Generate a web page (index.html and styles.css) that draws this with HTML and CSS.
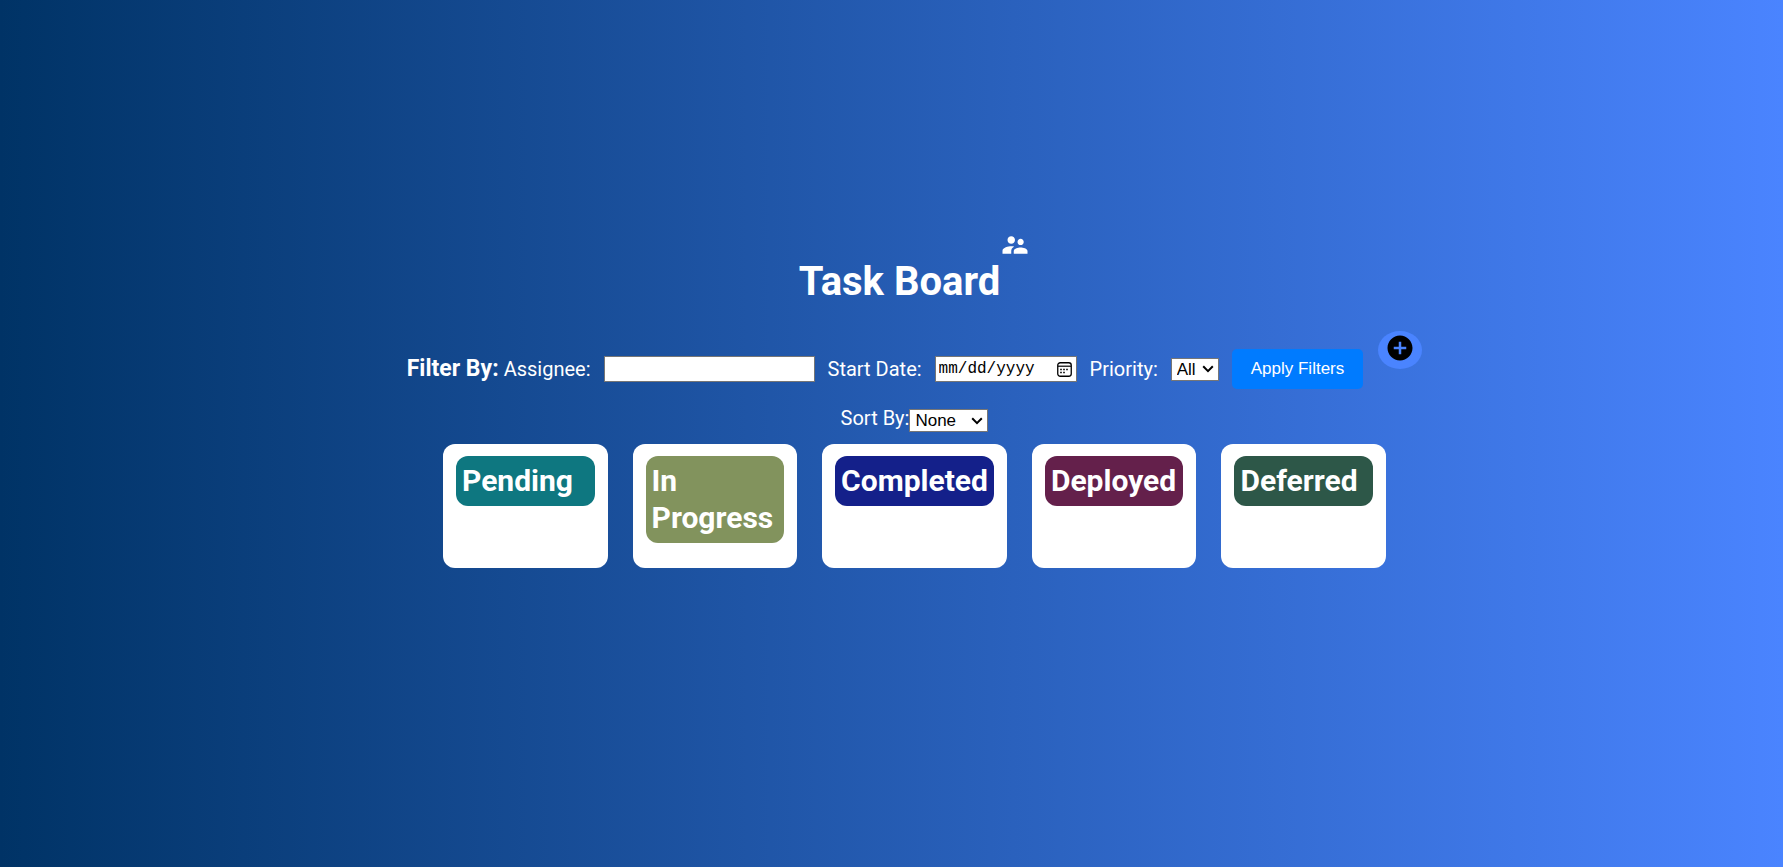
FILE: index.html
```html
<!DOCTYPE html>
<html lang="en">
<head>
<meta charset="utf-8">
<title>Task Board</title>
<link rel="stylesheet" href="styles.css">
</head>
<body>
<main class="board">
  <header class="board-header">
    <h1 class="board-title">Task Board</h1>
    <svg class="icon" viewBox="0 0 24 24" aria-hidden="true"><path d="M16.5 12c1.38 0 2.49-1.12 2.49-2.5S17.88 7 16.5 7C15.12 7 14 8.12 14 9.5s1.12 2.5 2.5 2.5zM9 11c1.66 0 2.99-1.34 2.99-3S10.66 5 9 5C7.34 5 6 6.34 6 8s1.34 3 3 3zm7.5 3c-1.83 0-5.5.92-5.5 2.75V19h11v-2.25c0-1.83-3.67-2.75-5.5-2.75zM9 13c-2.33 0-7 1.17-7 3.5V19h7v-2.25c0-.85.33-2.34 2.37-3.47C10.5 13.1 9.66 13 9 13z"/></svg>
  </header>
  <div class="toolbar">
    <form class="filters">
      <h2 class="filters-title">Filter By:</h2>
      <label for="assignee">Assignee:</label>
      <input class="field assignee" id="assignee" type="text">
      <label for="start-date">Start Date:</label>
      <input class="field date" id="start-date" type="date">
      <label for="priority">Priority:</label>
      <select class="field select" id="priority"><option>All</option><option>Low</option></select>
      <button class="apply" type="button">Apply Filters</button>
    </form>
    <button class="add" type="button" aria-label="Add task">
      <svg class="icon" viewBox="0 0 24 24" aria-hidden="true"><path d="M12 2C6.48 2 2 6.48 2 12s4.48 10 10 10 10-4.48 10-10S17.52 2 12 2zm5 11h-4v4h-2v-4H7v-2h4V7h2v4h4v2z"/></svg>
    </button>
  </div>
  <div class="sort">
    <label for="sort">Sort By:</label>
    <select class="field select sort-select" id="sort"><option>None</option><option>Priority</option></select>
  </div>
  <div class="columns">
    <section class="column"><h2 class="column-title pending">Pending</h2></section>
    <section class="column"><h2 class="column-title progress">In Progress</h2></section>
    <section class="column"><h2 class="column-title completed">Completed</h2></section>
    <section class="column"><h2 class="column-title deployed">Deployed</h2></section>
    <section class="column"><h2 class="column-title deferred">Deferred</h2></section>
  </div>
</main>
</body>
</html>
```
FILE: styles.css
```css
* {
  box-sizing: border-box;
}

body {
  margin: 0;
  color: #fff;
  font: 20px/23px Roboto, sans-serif;
  background: linear-gradient(to right, #003366, #4a84ff);
}

.board {
  min-height: 100vh;
  display: flex;
  flex-direction: column;
  align-items: center;
  justify-content: center;
  padding: 0 0 69px 46px;
}

.board-header,
.toolbar {
  display: flex;
  align-items: flex-start;
}

.board-title {
  margin: 28px 0 26px;
  font-size: 40px;
  line-height: 47px;
}

.icon {
  display: block;
  width: 30px;
  height: 30px;
  fill: currentColor;
}

.toolbar {
  gap: 15px;
}

.filters {
  display: flex;
  align-items: center;
  gap: 13px;
  padding-top: 2px;
}

.filters-title {
  margin: 22px -8px 22px 0;
  font-size: 23px;
  line-height: 28px;
}

.field {
  font-family: "Liberation Sans", sans-serif;
  font-size: 17px;
  border: 1px solid #767676;
  border-radius: 0;
  background: #fff;
  color: #000;
}

.assignee {
  width: 211px;
  height: 26px;
}

.date {
  width: 142px;
  height: 26px;
  padding: 0 4px 0 3px;
  font-family: "Liberation Mono", monospace;
  font-size: 16px;
}

.date::-webkit-datetime-edit-fields-wrapper,
.date::-webkit-datetime-edit {
  padding: 0;
}

.date::-webkit-datetime-edit-month-field,
.date::-webkit-datetime-edit-day-field,
.date::-webkit-datetime-edit-year-field {
  padding: 0;
}

.date::-webkit-calendar-picker-indicator {
  width: 15px;
  height: 15px;
  margin: 0;
  padding: 0;
  background: url("data:image/svg+xml,%3Csvg xmlns='http://www.w3.org/2000/svg' viewBox='0 0 15 15'%3E%3Crect x='.75' y='.75' width='13.5' height='13.5' rx='2.5' fill='none' stroke='%23000' stroke-width='1.3'/%3E%3Cpath d='M1 4.2h13' stroke='%23000' stroke-width='1.2'/%3E%3Cpath d='M6.2 7.5h1.6M9.2 7.5h1.6M3.2 7.5h1.6M3.2 10.5h1.6M6.2 10.5h1.6' stroke='%23000' stroke-width='1.6'/%3E%3C/svg%3E") center / 15px no-repeat;
}

.select {
  width: 48px;
  height: 23px;
  padding: 0 0 0 5px;
  appearance: none;
  background: #fff url("data:image/svg+xml,%3Csvg xmlns='http://www.w3.org/2000/svg' viewBox='0 0 12 8'%3E%3Cpath d='M1.2 1.3L6 6.1l4.8-4.8' fill='none' stroke='%23000' stroke-width='2'/%3E%3C/svg%3E") right 4px center / 12px 8px no-repeat;
}

.sort-select {
  width: 79px;
}

.apply {
  padding: 10px 19px;
  border: 0;
  border-radius: 5px;
  background: #007bff;
  color: #fff;
  font: 17px/20px "Liberation Sans", sans-serif;
}

.add {
  padding: 2px 7px 6px;
  border: 0;
  border-radius: 50%;
  background: #4a84ff;
  color: #000;
}

.sort {
  display: flex;
  align-items: flex-end;
  margin-bottom: 12px;
  line-height: 27px;
}

.columns {
  display: grid;
  grid-template-columns: repeat(5, 1fr);
  gap: 25px;
  width: 100%;
  max-width: 943px;
}

.column {
  padding: 12px 13px;
  border-radius: 12px;
  background: #fff;
}

.column-title {
  margin: 0 0 13px;
  padding: 6px 6px 7px;
  border-radius: 12px;
  font-size: 30px;
  line-height: 37px;
}

.pending {
  background: #0e7780;
}

.progress {
  background: #82935d;
}

.completed {
  background: #14208a;
}

.deployed {
  background: #64204b;
}

.deferred {
  background: #2d5748;
}
```
